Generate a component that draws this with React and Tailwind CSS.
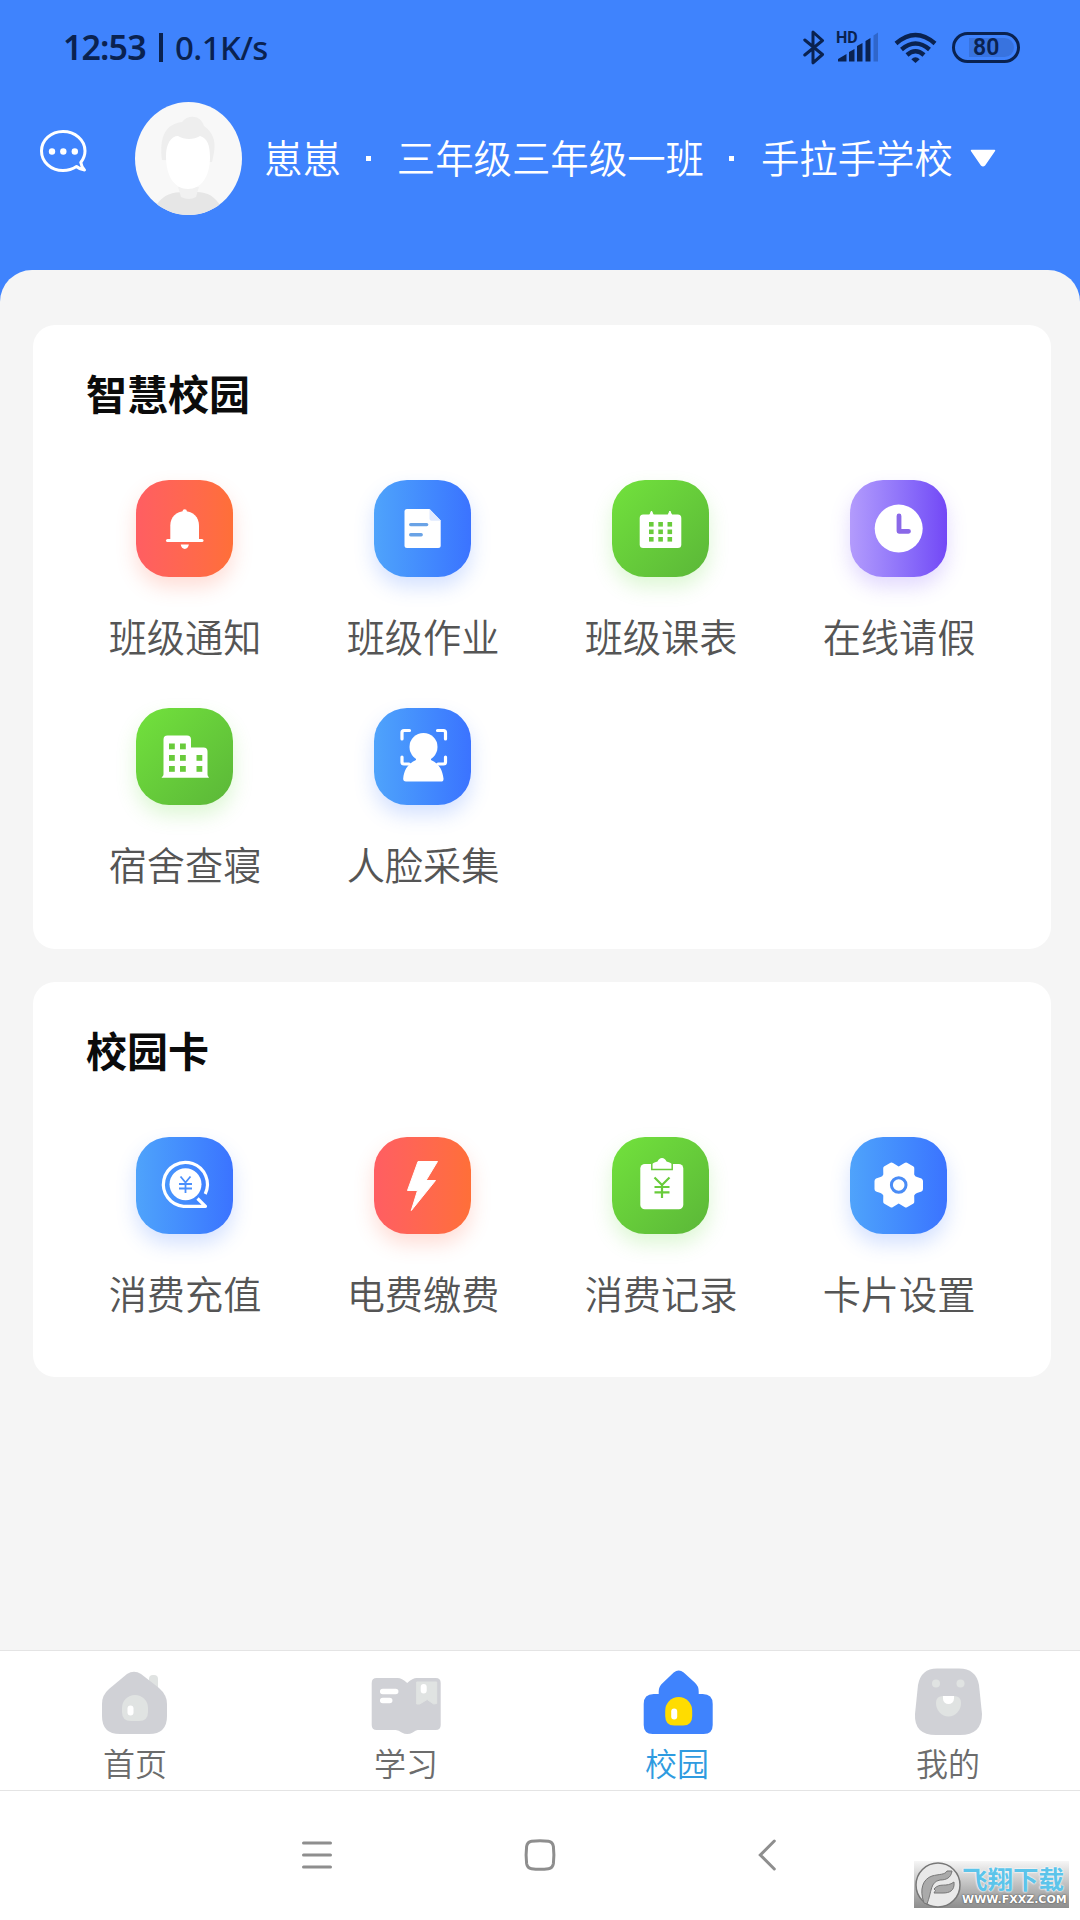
const grads = {
  red: 'bg-linear-to-r from-[#ff5e62] to-[#ff6f38] shadow-[0_10px_20px_rgba(255,100,70,0.22)]',
  blue: 'bg-linear-to-r from-[#4fa3fb] to-[#3b73ff] shadow-[0_10px_20px_rgba(60,120,255,0.22)]',
  green: 'bg-linear-to-br from-[#72e23c] to-[#5bb738] shadow-[0_10px_20px_rgba(100,220,60,0.22)]',
  purple: 'bg-linear-to-r from-[#b39bfc] to-[#7347f6] shadow-[0_10px_20px_rgba(125,80,250,0.22)]',
};

/* Glyphs are drawn on the 97 x 97 tile grid. */
const glyphs = {
  bell: (
    <g fill="#fff">
      <circle cx="48.7" cy="31.5" r="2.2" />
      <path d="M34.3 60V45.5C34.3 37 40.5 31.3 48.7 31.3S63 37 63 45.5V60Z" />
      <rect x="30" y="59" width="37.5" height="3" rx="1.5" />
      <path d="M44.7 64.5h8.2c-.5 2.8-2 4.4-4.1 4.4s-3.700-1.600-4.100-4.400Z" />
    </g>
  ),
  doc: (
    <g>
      <path d="M33 29h22.500L66.700 40.500V65.500a2.500 2.500 0 0 1-2.500 2.500H33a2.500 2.500 0 0 1-2.500-2.500V31.500A2.500 2.500 0 0 1 33 29Z" fill="#fff" />
      <path d="M55.500 29 66.700 40.800H57.500a2 2 0 0 1-2-2Z" fill="#dfeaff" />
      <path d="M36.700 44.600h16M36.700 54.800h10.500" stroke="#6aa3e6" strokeWidth="3.400" strokeLinecap="round" />
    </g>
  ),
  calendar: (
    <g>
      <rect x="27.700" y="34.500" width="41.600" height="33.500" rx="3.500" fill="#fff" />
      <path d="M37.300 36l2.200-5 2.200 5ZM55.700 36l2.200-5 2.200 5Z" fill="#fff" stroke="#fff" />
      {[42, 49.500, 57].map((y) =>
        [37, 46.300, 55.500].map((x) => <rect key={x + '-' + y} x={x} y={y} width="4.600" height="4.600" fill="#69cb3b" />)
      )}
    </g>
  ),
  clock: (
    <g>
      <circle cx="48.700" cy="48.600" r="24" fill="#fff" />
      <path d="M49 36v15.300h9.500" fill="none" stroke="#8a68e8" strokeWidth="4.800" strokeLinecap="round" strokeLinejoin="round" />
    </g>
  ),
  building: (
    <g>
      <path d="M27.500 67.500V31.500a4 4 0 0 1 4-4H51a4 4 0 0 1 4 4V39.500H67.500a4 4 0 0 1 4 4V67.500Z" fill="#fff" />
      <path d="M25.500 69.700 28 66.500H71l2 3.200Z" fill="#fff" />
      {[[33, 35.500], [44, 35.500], [33, 47], [44, 47], [60.500, 47], [33, 58], [44, 58], [60.500, 58]].map(([x, y]) => (
        <rect key={x + '-' + y} x={x} y={y} width="5.800" height="5.800" fill="#69cb3b" />
      ))}
    </g>
  ),
  face: (
    <g fill="#fff">
      <path d="M28 31V24.500q0-2 2-2H35.500M63.500 22.500H69.500q2 0 2 2V31M28 49V54q0 2 2 2H35M64 56H69.500q2 0 2-2V49" fill="none" stroke="#fff" strokeWidth="3.200" strokeLinecap="round" />
      <circle cx="49.500" cy="39" r="14" />
      <path d="M42 48H57V52C64 55 68.500 61 69.500 70.500Q69.700 73.500 67 73.500H32Q29 73.500 29.200 70.500C30 61 35 55 42 52Z" />
    </g>
  ),
  recharge: (
    <g fill="none" stroke="#fff" strokeLinejoin="round">
      <circle cx="49.500" cy="47.300" r="16" fill="#fff" stroke="none" />
      <path d="M69.200 57A22 22 0 1 0 47.500 69.300H69.500L61.500 61.500" strokeWidth="3.200" />
      <path d="M44.500 39.500 49.500 45.500 54.500 39.500M49.500 45.500V56M43 47H56M43 51.500H56" stroke="#4b8ffc" strokeWidth="1.800" />
    </g>
  ),
  bolt: <path d="M44 24.500H63.500L52 43.500H61.500L37.300 73.500 43.500 53.500H33.500Z" fill="#fff" stroke="#fff" strokeWidth="1" strokeLinejoin="round" />,
  record: (
    <g>
      <rect x="28.300" y="27" width="43" height="45.300" rx="4.500" fill="#fff" />
      <path d="M40 32V28.500q0-2.500 2.500-3L45.500 24.500q1.500-3.500 4.500-3.500T54.500 24.500l3 1q2.500.5 2.500 3V32Z" fill="#fff" />
      <path d="M39.800 26.500V32.500H60.200V26.500" fill="none" stroke="#69cb3b" strokeWidth="1.500" />
      <path d="M42.500 40.500 50 48 57.500 40.500M50 48V61M42.500 50H57.500M42.500 55.300H57.500" fill="none" stroke="#69cb3b" strokeWidth="2.200" />
    </g>
  ),
  gear: (
    <g>
      <path d="M40.500 25.700Q41.700 25 43 26L48.700 29.500 54.500 26Q55.800 25 57 25.700L63.500 29.500Q64.500 30.300 64.300 32L64.200 37.500Q65 39.500 67 40L71.500 41.500Q73 42.500 73 44V52Q73 53.500 71.500 54.500L67 56Q65 56.500 64.200 58.500L64.300 64Q64.500 65.700 63.500 66.500L57 70.300Q55.800 71 54.500 70L48.700 66.500 43 70Q41.700 71 40.500 70.300L34 66.500Q33 65.700 33.200 64L33.300 58.500Q32.500 56.500 30.500 56L26 54.500Q24.500 53.500 24.500 52V44Q24.500 42.500 26 41.500L30.500 40Q32.500 39.500 33.300 37.500L33.200 32Q33 30.300 34 29.500Z" fill="#fff" />
      <circle cx="48.700" cy="48" r="7.300" fill="#fff" stroke="#4a8cf6" strokeWidth="3" />
    </g>
  ),
};

function Tile({ label, icon, color }) {
  return (
    <div className="flex flex-col items-center">
      <div className={'mr-[2px] h-[97px] w-[97px] rounded-[33px] ' + grads[color]}>
        <svg viewBox="0 0 97 97" className="h-full w-full">{glyphs[icon]}</svg>
      </div>
      <span className="mt-[34px] text-[38.2px] leading-[50px] font-[350] whitespace-nowrap text-[#555]">{label}</span>
    </div>
  );
}

function Card({ title, items, className }) {
  return (
    <section className={'rounded-[22px] bg-white px-[33px] ' + className}>
      <h2 className="ml-[20px] pt-[37px] text-[41px] leading-[60px] font-bold text-[#0b0b0b]">{title}</h2>
      <div className="mt-[58px] grid grid-cols-4 gap-y-[47px]">
        {items.map((it) => <Tile key={it.label} {...it} />)}
      </div>
    </section>
  );
}

const campus = [
  { label: '班级通知', icon: 'bell', color: 'red' },
  { label: '班级作业', icon: 'doc', color: 'blue' },
  { label: '班级课表', icon: 'calendar', color: 'green' },
  { label: '在线请假', icon: 'clock', color: 'purple' },
  { label: '宿舍查寝', icon: 'building', color: 'green' },
  { label: '人脸采集', icon: 'face', color: 'blue' },
];
const card = [
  { label: '消费充值', icon: 'recharge', color: 'blue' },
  { label: '电费缴费', icon: 'bolt', color: 'red' },
  { label: '消费记录', icon: 'record', color: 'green' },
  { label: '卡片设置', icon: 'gear', color: 'blue' },
];

function StatusBar() {
  return (
    <div className="flex h-[94px] items-center pr-[60px] pl-[63px] text-[#0a2250]">
      <div className="flex items-center font-['Noto_Sans'] leading-none">
        <span className="w-[85px] text-[34px] font-semibold tracking-[-0.9px]">12:53</span>
        <span className="mr-[12px] ml-[11px] h-[29px] w-[4px] bg-[#0a2250]" />
        <span className="text-[33px] font-medium tracking-[-0.6px]">0.1K/s</span>
      </div>
      <div className="ml-auto flex items-center">
        <svg width="22" height="35" viewBox="0 0 22 35" fill="none" stroke="#0a2250" strokeWidth="3" strokeLinejoin="round" strokeLinecap="round">
          <path d="M1.800 10 19.500 24.500 10 32.800V2L19.500 10.500 1.800 25" />
        </svg>
        <div className="relative ml-[12px] h-[30px] w-[42px]">
          <span className="absolute -top-[2px] -left-[1px] font-['Roboto'] text-[16px] leading-[15px] font-bold">HD</span>
          <svg width="42" height="30" viewBox="0 0 42 30" fill="#0a2250">
            <path d="M1 29.500V27L9.500 22V29.500ZM12 29.500V20L17.500 17V29.500ZM20 29.500V14L25.500 11V29.500ZM28.500 29.500V9L33.500 6V29.500Z" />
            <path d="M36.500 29.500V3.500L41 .500V29.500Z" fill="#2f66cb" />
          </svg>
        </div>
        <svg className="ml-[15px]" width="43" height="31" viewBox="0 0 43 31" fill="none" stroke="#0a2250" strokeWidth="4.400">
          <path d="M2 11.500Q21.500-5.500 41 11.500M7.500 17.500Q21.500 5.500 35.500 17.500M13 23Q21.500 15.500 30 23" />
          <path d="M17.300 27.300q4.200-4 8.400 0L21.500 31Z" fill="#0a2250" stroke="none" />
        </svg>
        <div className="ml-[15px] flex h-[31px] w-[68px] items-center justify-center rounded-full border-3 border-[#0a2250] px-[3px]">
          <span className="ml-[11px] flex h-[19px] w-[46px] items-center rounded-r-full bg-[#3873df] pl-[4px] font-['Roboto'] text-[23px] leading-none font-semibold">80</span>
        </div>
      </div>
    </div>
  );
}

function Avatar() {
  return (
    <svg width="107" height="113" viewBox="0 0 107 113" className="ml-[48px]">
      <clipPath id="avatar"><ellipse cx="53.500" cy="56.500" rx="53.500" ry="56.500" /></clipPath>
      <g clipPath="url(#avatar)">
        <rect width="107" height="113" fill="#f8f8f8" />
        <path d="M27 58C24 34 31 22 47 20 53 12 66 13 69 24 80 32 82 42 77 60Z" fill="#eeeeee" />
        <path d="M20 105C27 93 38 88 53 91 68 88 79 92 86 105V113H20Z" fill="#e6e6e6" />
        <path d="M43 85H64L61 95Q54 99 46 95Z" fill="#f1f1f1" />
        <path d="M31 54C31 42 36 34 43 34 49 38 59 38 65 34 72 36 75 43 75 55 75 75 66 87 53 87S31 75 31 54Z" fill="#fff" />
      </g>
    </svg>
  );
}

const tabs = [
  {
    label: '首页',
    icon: (
      <g transform="translate(-1 0)">
        <rect x="48" y="5" width="9" height="16" rx="4" fill="#e0e3e2" />
        <path d="M26 4q7-4.500 14 0L58 18q8 7 8 16V46q0 18-18 18H19Q1 64 1 46V34q0-9 7-15Z" fill="#d0d1d6" />
        <path d="M21 38a13 13 0 0 1 26 0V42q0 9-9 9H30q-9 0-9-9Z" fill="#e0e3e2" />
        <rect x="26.500" y="35.500" width="6" height="10" rx="3" fill="#fff" />
      </g>
    ),
  },
  {
    label: '学习',
    icon: (
      <g transform="translate(0.700 0)">
        <path d="M5 8H24q4 0 9.500 5Q39 8 43 8H62q5 0 5 5V55q0 5-5 5H44q-2 0-5 2.500-5.500 3-11 0Q25 60 22 60H3q-5 0-5-5V13q0-5 5-5Z" fill="#d0d1d6" />
        <path d="M43 12H63V33.500L60 34 53.500 29.500 46 34H43Z" fill="#e0e3e2" stroke="#e0e3e2" strokeLinejoin="round" />
        <path d="M9 21.500H22M9 30.500H16" stroke="#fff" strokeWidth="5.500" strokeLinecap="round" />
        <rect x="47" y="14" width="6" height="9.500" rx="3" fill="#fff" />
      </g>
    ),
  },
  {
    label: '校园',
    active: true,
    icon: (
      <g transform="translate(0.700 0)">
        <path d="M29 2.500q5-4 10 0L50 12.500q4 3.500 4 9V24H58q10 0 10 10V55q0 9-9 9H8q-9 0-9-9V34q0-10 10-10H14V21.500q0-5 4-8.500Z" fill="#3f83fd" />
        <path d="M20.500 41a13.500 14 0 0 1 27 0V46q0 9.500-9 9.500H29.500q-9 0-9-9.500Z" fill="#ffdc00" />
        <rect x="26.500" y="38.500" width="6" height="11" rx="3" fill="#fff" />
      </g>
    ),
  },
  {
    label: '我的',
    icon: (
      <g>
        <path d="M22-1.500H44Q61-1.500 64 15L67 44Q67 65 45 65H21Q-1 65 0 44L3 15Q6-1.500 22-1.500Z" fill="#d0d1d6" />
        <circle cx="21" cy="13.500" r="4" fill="#e0e3e2" />
        <circle cx="45.500" cy="13.500" r="4" fill="#e0e3e2" />
        <path d="M21 33q0-7 7-7H39q7 0 7 7A12.500 13.500 0 0 1 21 33Z" fill="#e0e3e2" />
        <path d="M28 26H39V28.500a5.500 5.500 0 0 1-11 0Z" fill="#fff" />
      </g>
    ),
  },
];

function Watermark() {
  return (
    <div className="absolute right-[11px] bottom-[12px] flex h-[47px] w-[155px] items-center bg-linear-to-b from-[#f6f6f6] to-[#8d8d8d] pl-[1px]">
      <svg width="46" height="46" viewBox="0 0 46 46" className="shrink-0">
        <circle cx="23" cy="23" r="22" fill="#e9e9e9" stroke="#777" strokeWidth="1.500" />
        <path d="M9 41C4 27 8 17 17 14 24 12 30 13 32 9L37 9C36 16 31 18 25 18 15 20 17 29 12 42ZM19 27C25 20 31 26 39 20 40 29 34 31 28 31L19 31Q22 28 19 27Z" fill="#aaa" stroke="#777" strokeLinejoin="round" />
      </svg>
      <div className="flex flex-col pl-[1px] leading-none">
        <span className="text-[25.500px] leading-[27px] font-bold whitespace-nowrap text-[#5cc4ea] [text-shadow:0_0_2px_#fff,0_0_2px_#fff]">飞翔下载</span>
        <span className="mt-[2px] font-['DejaVu_Sans'] text-[11px] leading-[13px] font-bold whitespace-nowrap text-white [text-shadow:0_0_2px_#555,0_0_1px_#555]">WWW.FXXZ.COM</span>
      </div>
    </div>
  );
}

export default function App() {
  return (
    <div className="relative flex h-[1920px] w-[1080px] flex-col overflow-hidden bg-[#3f83fd] font-['Noto_Sans_CJK_SC',sans-serif]">
      <StatusBar />
      <header className="flex h-[176px] items-start pt-[8px] pl-[40px] text-white">
        <svg width="47" height="43" viewBox="0 0 47 43" className="mt-[28px]">
          <path d="M36.500 36.500C32 39.500 28 40.500 23 40.500 11 40.500 1.500 32 1.500 21S11 1.500 23 1.500 45 10 45 21C45 25.500 43.500 29 40.800 32.500Q41.500 37 44.500 40 40 39.500 36.500 36.500Z" fill="none" stroke="#fff" strokeWidth="3" strokeLinejoin="round" />
          <g fill="#fff"><circle cx="12" cy="21.500" r="3.200" /><circle cx="23.300" cy="21.500" r="3.200" /><circle cx="34.800" cy="21.500" r="3.200" /></g>
        </svg>
        <Avatar />
        <div className="mt-[29px] ml-[22px] flex items-center text-[38.400px] leading-[50px] font-[350] whitespace-nowrap">
          <span>崽崽</span>
          <i className="mt-[4px] mr-[26px] ml-[25px] h-[5px] w-[5px] bg-white" />
          <span>三年级三年级一班</span>
          <i className="mt-[4px] mr-[27px] ml-[25px] h-[5px] w-[5px] bg-white" />
          <span>手拉手学校</span>
          <svg width="26" height="18" viewBox="0 0 26 18" className="mt-[3px] ml-[17px]">
            <path d="M1.500 1.500H24.500L14.500 16q-1.500 1.500-3 0Z" fill="#fff" stroke="#fff" strokeWidth="1.500" strokeLinejoin="round" />
          </svg>
        </div>
      </header>
      <main className="flex flex-1 flex-col rounded-t-[32px] bg-[#f5f5f5] pt-[55px] pr-[29px] pl-[33px]">
        <Card title="智慧校园" items={campus} className="h-[624px]" />
        <Card title="校园卡" items={card} className="mt-[33px] h-[395px]" />
      </main>
      <nav className="flex h-[141px] border-y border-[#e4e4e4] bg-white">
        {tabs.map((t) => (
          <div key={t.label} className="flex w-[271px] shrink-0 flex-col items-center pt-[19px]">
            <svg width="68" height="66" viewBox="0 0 68 66" overflow="visible">{t.icon}</svg>
            <span className={'mt-[3px] mr-[1px] text-[32px] leading-[46px] font-[350] ' + (t.active ? 'text-[#2f9be0]' : 'text-[#6c6c6c]')}>{t.label}</span>
          </div>
        ))}
      </nav>
      <div className="flex h-[129px] bg-white pt-[47px]">
        <svg width="30" height="34" viewBox="0 0 30 34" className="ml-[302px]"><path d="M1.500 5H28.500M1.500 17H28.500M1.500 29H28.500" stroke="#8e8e8e" strokeWidth="3" strokeLinecap="round" /></svg>
        <svg width="32" height="34" viewBox="0 0 32 34" className="ml-[192px]"><path d="M7.500 3.300Q16 2 24.500 3.300 28.700 4 29.400 8.500 30.400 17 29.400 25.500 28.700 30 24.500 30.700 16 32 7.500 30.700 3.300 30 2.600 25.500 1.600 17 2.600 8.500 3.300 4 7.500 3.300Z" fill="none" stroke="#8e8e8e" strokeWidth="3" /></svg>
        <svg width="19" height="34" viewBox="0 0 19 34" className="ml-[202px]"><path d="M16.300 3 2.300 17 16.300 31" fill="none" stroke="#8e8e8e" strokeWidth="3" strokeLinecap="round" /></svg>
      </div>
      <Watermark />
    </div>
  );
}
